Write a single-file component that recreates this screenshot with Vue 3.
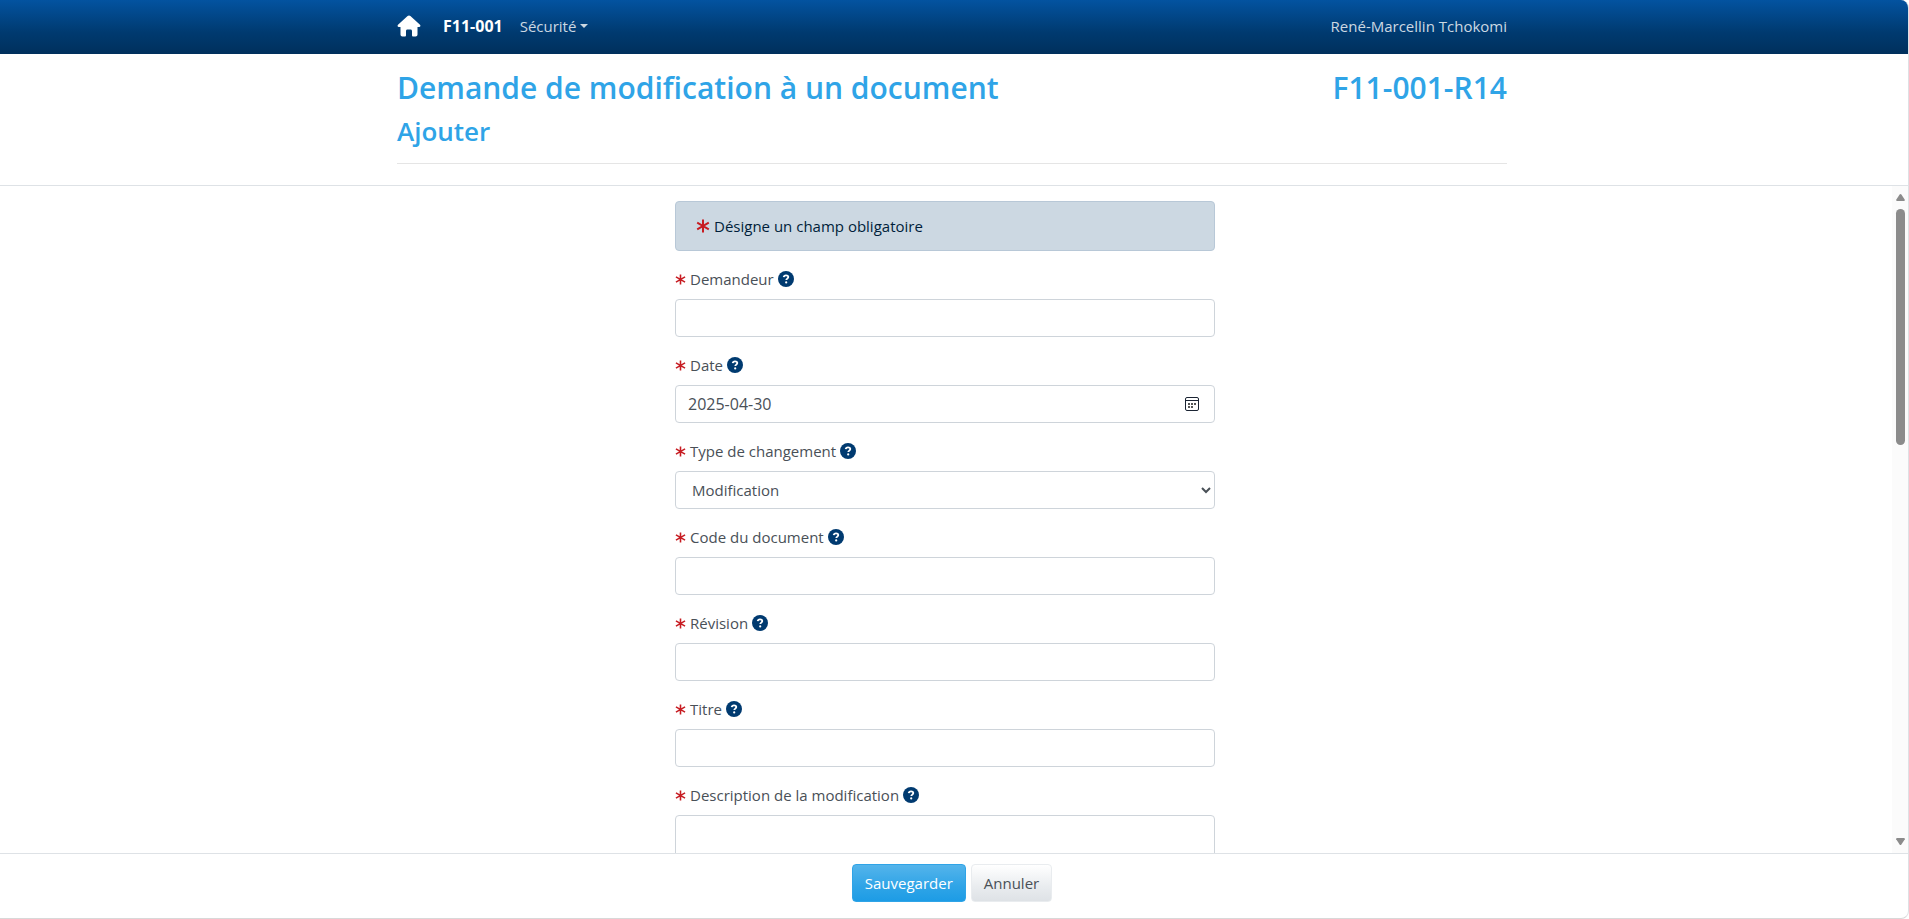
<script setup>
import { ref } from 'vue'

const fields = ref([
  { id: 'demandeur', label: 'Demandeur', kind: 'text', value: '' },
  { id: 'date', label: 'Date', kind: 'date', value: '2025-04-30' },
  { id: 'type', label: 'Type de changement', kind: 'select', value: 'Modification' },
  { id: 'code', label: 'Code du document', kind: 'text', value: '' },
  { id: 'revision', label: 'Révision', kind: 'text', value: '' },
  { id: 'titre', label: 'Titre', kind: 'text', value: '' },
  { id: 'description', label: 'Description de la modification', kind: 'area', value: '' }
])
</script>

<template>
  <div class="page">
    <nav class="navbar">
      <div class="container">
        <a class="home" href="#" aria-label="Accueil">
          <svg viewBox="0 0 24 22" width="24" height="22">
            <path fill="#fff" d="M12 .5c.6 0 1 .2 1.400.6l9.600 8.600c.9.800.3 2.300-.8 2.300H20.500v7.500c0 1.100-.8 2-1.900 2h-2.300c-.8 0-1.300-.6-1.300-1.300V16c0-.9-.6-1.500-1.400-1.500h-3.200c-.8 0-1.400.6-1.400 1.500v4.200c0 .7-.5 1.300-1.300 1.300H5.400c-1.100 0-1.900-.9-1.900-2V12H1.800c-1.100 0-1.700-1.500-.8-2.300l9.600-8.600c.4-.4.8-.6 1.400-.6z" />
          </svg>
        </a>
        <a class="brand" href="#">F11-001</a>
        <button class="menu" type="button">Sécurité<span class="caret"></span></button>
        <a class="user" href="#">René-Marcellin Tchokomi</a>
      </div>
    </nav>

    <header class="heading">
      <div class="container heading-inner">
        <div class="title-row">
          <h1>Demande de modification à un document</h1>
          <span class="code">F11-001-R14</span>
        </div>
        <h2>Ajouter</h2>
        <hr />
      </div>
    </header>

    <main class="body">
      <div class="scroll">
        <form id="demande" class="form" @submit.prevent>
          <div class="alert">
            <svg class="star" viewBox="0 0 14 14" width="14" height="14">
              <path d="M7 .5v13M1.200 3.700l11.600 6.600M12.800 3.700L1.200 10.300" />
            </svg>
            <span>Désigne un champ obligatoire</span>
          </div>

          <div v-for="f in fields" :key="f.id" class="field">
            <div class="label-row">
              <svg class="star" viewBox="0 0 14 14" width="11" height="11">
                <path d="M7 .5v13M1.200 3.700l11.600 6.600M12.800 3.700L1.200 10.300" />
              </svg>
              <label :for="f.id">{{ f.label }}</label>
              <button class="help" type="button" :aria-label="'Aide : ' + f.label">
                <svg viewBox="0 0 16 16" width="16" height="16">
                  <circle cx="8" cy="8" r="8" fill="#003a70" />
                  <path d="M5.700 6.200C5.900 4.900 6.800 4.300 8 4.300c1.300 0 2.300.7 2.300 1.800 0 1.500-2 1.500-2 2.900" fill="none" stroke="#fff" stroke-width="1.800" />
                  <circle cx="8.200" cy="11.400" r="1.100" fill="#fff" />
                </svg>
              </button>
            </div>
            <select v-if="f.kind === 'select'" :id="f.id" v-model="f.value" class="control">
              <option>Modification</option>
            </select>
            <textarea v-else-if="f.kind === 'area'" :id="f.id" v-model="f.value" class="control area"></textarea>
            <div v-else-if="f.kind === 'date'" class="control date">
              <input :id="f.id" v-model="f.value" type="text" />
              <button type="button" aria-label="Choisir une date">
                <svg viewBox="0 0 14 14" width="14" height="14">
                  <rect x=".5" y=".5" width="13" height="13" rx="1.500" fill="none" stroke="#1b2433" />
                  <path d="M1 3.500h12" stroke="#1b2433" />
                  <path d="M3 6h2v2H3zM6 6h2v2H6zM9 6h2v2H9zM3 9h2v2H3zM6 9h2v2H6z" fill="#555" />
                </svg>
              </button>
            </div>
            <input v-else :id="f.id" v-model="f.value" type="text" class="control" />
          </div>
        </form>
      </div>
      <div class="scrollbar" aria-hidden="true">
        <svg viewBox="0 0 9 7" width="9" height="7"><path d="M4.500 0Q5 0 5.400.6L8.800 5.800Q9 7 8 7H1Q0 7 .2 5.800L3.600.6Q4 0 4.500 0z" /></svg>
        <div class="track"><div class="thumb"></div></div>
        <svg viewBox="0 0 9 7" width="9" height="7"><path d="M4.500 7Q5 7 5.400 6.400L8.800 1.200Q9 0 8 0H1Q0 0 .2 1.200L3.600 6.400Q4 7 4.500 7z" /></svg>
      </div>
    </main>

    <footer class="actions">
      <button class="btn primary" type="submit" form="demande">Sauvegarder</button>
      <button class="btn light" type="button">Annuler</button>
    </footer>
  </div>
</template>

<style>
body {
  margin: 0;
  background: #fff;
}
</style>

<style scoped>
.page,
.page * {
  box-sizing: border-box;
}
.page {
  display: flex;
  flex-direction: column;
  height: 100vh;
  overflow: hidden;
  border-right: 1px solid #dee0e4;
  border-bottom: 1px solid #d8d8d8;
  border-radius: 0 8px 8px 0;
  font: 15px/24px "Open Sans", "Noto Sans", sans-serif;
  color: #495057;
}
button,
input,
select,
textarea {
  font: inherit;
  color: inherit;
}
a {
  text-decoration: none;
}
.container {
  width: 100%;
  max-width: 1110px;
  margin: 0 auto;
}
.navbar {
  flex: none;
  display: flex;
  height: 54px;
  padding: 0 4px 2px 0;
  background: linear-gradient(#0353a0, #003a70 60%, #00305c);
}
.navbar .container {
  display: flex;
  align-items: center;
}
.home {
  display: flex;
  margin-right: 22px;
}
.brand {
  margin-right: 17px;
  color: #fff;
  font-size: 16px;
  font-weight: 700;
}
.menu {
  display: flex;
  align-items: center;
  gap: 4px;
  padding: 0;
  border: 0;
  background: none;
  color: #ccd8e2;
}
.caret {
  border: 4px solid transparent;
  border-top-color: #ccd8e2;
  border-bottom: 0;
}
.user {
  margin-left: auto;
  color: #ccd8e2;
}
.heading {
  flex: none;
  padding: 15px 4px 21px 0;
  border-bottom: 1px solid #dee2e6;
  color: #2fa4e7;
}
.title-row {
  display: flex;
  justify-content: space-between;
}
h1,
h2,
.code {
  margin: 0;
  font-size: 30px;
  font-weight: 600;
  line-height: 38px;
}
h2 {
  margin-top: 7px;
  font-size: 26px;
  line-height: 34px;
}
hr {
  margin: 15px 0 0;
  border: 0;
  border-top: 1px solid #e5e5e5;
}
.body {
  flex: 1;
  min-height: 0;
  display: flex;
}
.scroll {
  flex: 1;
  overflow-y: auto;
  scrollbar-width: none;
  padding: 15px 2px 0 0;
}
.form {
  width: 100%;
  max-width: 540px;
  margin: 0 auto;
}
.alert {
  display: flex;
  align-items: center;
  gap: 4px;
  padding: 12px 20px;
  border: 1px solid #b8c8d7;
  border-radius: 4px;
  background: #ccd8e2;
  color: #001e3a;
}
.star {
  flex: none;
  fill: none;
  stroke: #c71c22;
  stroke-width: 2;
}
.field {
  display: flex;
  flex-direction: column;
  margin-top: 16px;
}
.label-row {
  display: flex;
  align-items: center;
  gap: 4px;
  margin-bottom: 8px;
}
.help {
  display: flex;
  padding: 0;
  border: 0;
  background: none;
}
.control {
  width: 100%;
  height: 38px;
  padding: 6px 12px;
  border: 1px solid #ced4da;
  border-radius: 4px;
  background: #fff;
  outline: none;
}
.area {
  height: 110px;
  resize: none;
}
.date {
  display: flex;
  align-items: center;
  padding-right: 15px;
}
.date input {
  flex: 1;
  min-width: 0;
  padding: 0;
  border: 0;
  outline: none;
  font-size: 16px;
}
.date button {
  display: flex;
  padding: 0;
  border: 0;
  background: none;
}
.scrollbar {
  flex: none;
  display: flex;
  flex-direction: column;
  align-items: center;
  gap: 8px;
  width: 16px;
  padding: 8px 2px 8px 3px;
  background: #fbfbfb;
  fill: #8b8b8b;
}
.track {
  flex: 1;
  width: 9px;
}
.thumb {
  height: 38%;
  border-radius: 5px;
  background: #8b8b8b;
}
.actions {
  flex: none;
  display: flex;
  justify-content: center;
  gap: 5px;
  padding: 10px 4px 16px 0;
  border-top: 1px solid #dee2e6;
}
.btn {
  height: 38px;
  padding: 6px 12px;
  border: 1px solid;
  border-radius: 4px;
}
.primary {
  border-color: #2fa4e7;
  background: linear-gradient(#54b4eb, #2fa4e7 60%, #1d9ce5);
  color: #fff;
}
.light {
  border-color: #e9ecef;
  background: linear-gradient(#fff, #e9ecef 60%, #dee2e6);
}
</style>
